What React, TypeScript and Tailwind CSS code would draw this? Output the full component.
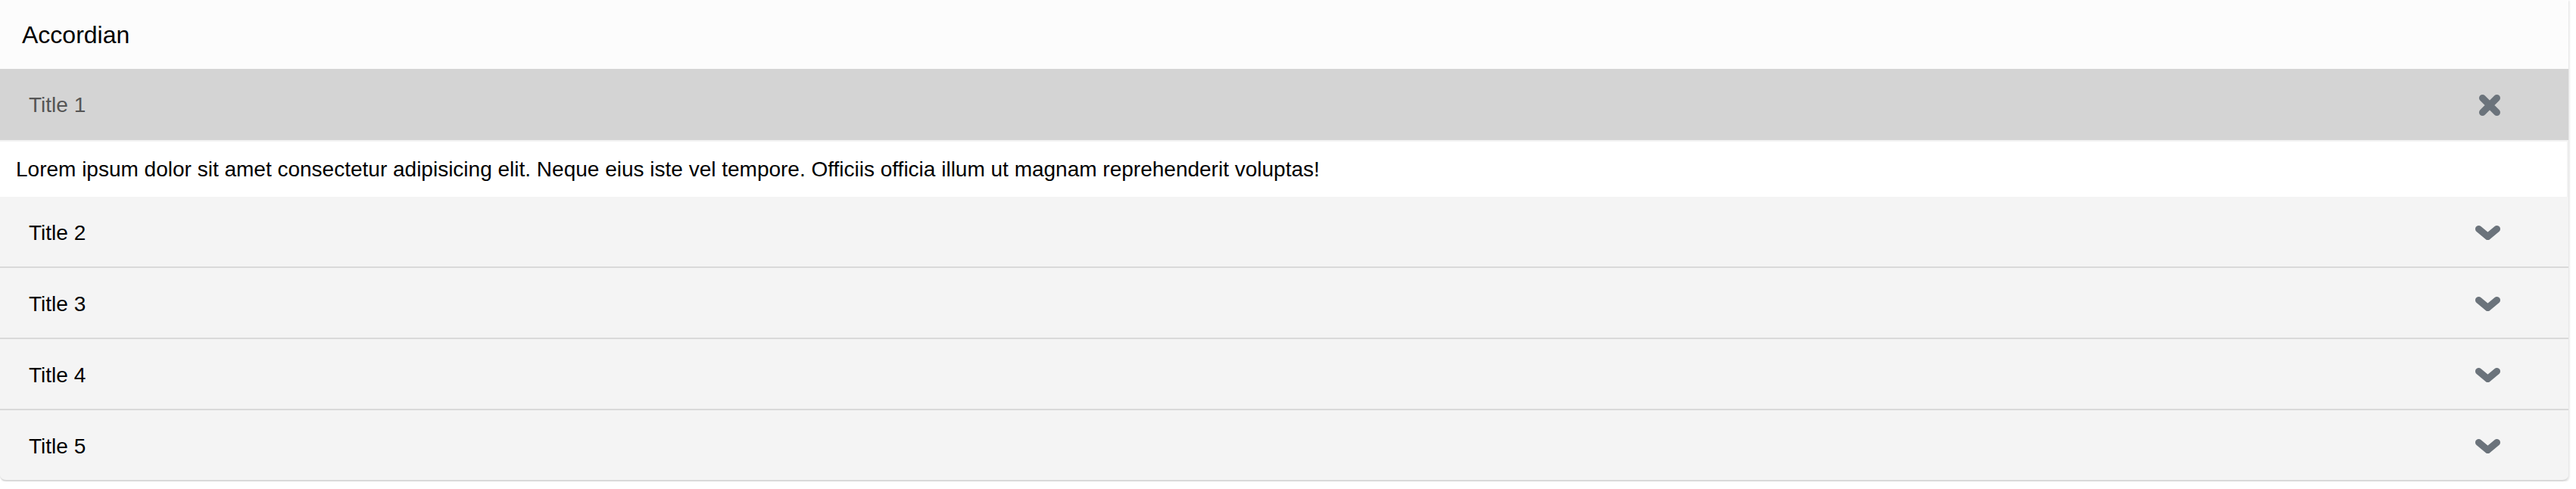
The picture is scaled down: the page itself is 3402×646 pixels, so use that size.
import { useState } from 'react';

const items = [
  {
    id: 1,
    title: 'Title 1',
    body: 'Lorem ipsum dolor sit amet consectetur adipisicing elit. Neque eius iste vel tempore. Officiis officia illum ut magnam reprehenderit voluptas!',
  },
  { id: 2, title: 'Title 2', body: 'Lorem ipsum dolor sit amet consectetur adipisicing elit.' },
  { id: 3, title: 'Title 3', body: 'Lorem ipsum dolor sit amet consectetur adipisicing elit.' },
  { id: 4, title: 'Title 4', body: 'Lorem ipsum dolor sit amet consectetur adipisicing elit.' },
  { id: 5, title: 'Title 5', body: 'Lorem ipsum dolor sit amet consectetur adipisicing elit.' },
];

function CloseIcon() {
  return (
    <svg width="28" height="28" viewBox="0 0 28 28" fill="none">
      <path
        d="M4.5 4.5 L23.5 23.5 M23.5 4.5 L4.5 23.5"
        stroke="#6b737b"
        strokeWidth="9"
        strokeLinecap="round"
      />
    </svg>
  );
}

function ChevronIcon() {
  return (
    <svg width="33" height="19" viewBox="0 0 33 19" fill="none">
      <path
        d="M4.5 4.5 L16.5 14.5 L28.5 4.5"
        stroke="#6b737b"
        strokeWidth="9"
        strokeLinecap="round"
        strokeLinejoin="round"
      />
    </svg>
  );
}

export default function App() {
  const [openId, setOpenId] = useState<number | null>(1);

  return (
    <div className="w-[3392px] bg-white font-['Liberation_Sans',Arial,sans-serif] rounded-b-lg shadow-[1px_1px_3px_rgba(0,0,0,0.14)]">
      {/* Header */}
      <div className="h-[91px] flex items-center pl-[29px] bg-[#fcfcfc] text-[32px] text-black">
        Accordian
      </div>

      {items.map((item, i) => {
        const isOpen = openId === item.id;
        const isLast = i === items.length - 1;
        return (
          <div key={item.id}>
            <button
              onClick={() => setOpenId(isOpen ? null : item.id)}
              className={`w-full flex items-center justify-between pl-[38px] pr-[90px] text-left text-[28px] ${
                isOpen
                  ? 'h-[94px] pt-[2px] bg-[#d4d4d4] text-[#555555]'
                  : `h-[94px] pt-[3px] bg-[#f4f4f4] text-black border-b-2 border-[#d9d9d9] ${isLast ? 'rounded-b-lg' : ''}`
              }`}
            >
              <span>{item.title}</span>
              {isOpen ? <CloseIcon /> : <ChevronIcon />}
            </button>
            {isOpen && (
              <div className="h-[75px] flex items-center pl-[21px] bg-white border-t-2 border-r-2 border-[#f2f2f2] text-[28px] text-black">
                {item.body}
              </div>
            )}
          </div>
        );
      })}
    </div>
  );
}
